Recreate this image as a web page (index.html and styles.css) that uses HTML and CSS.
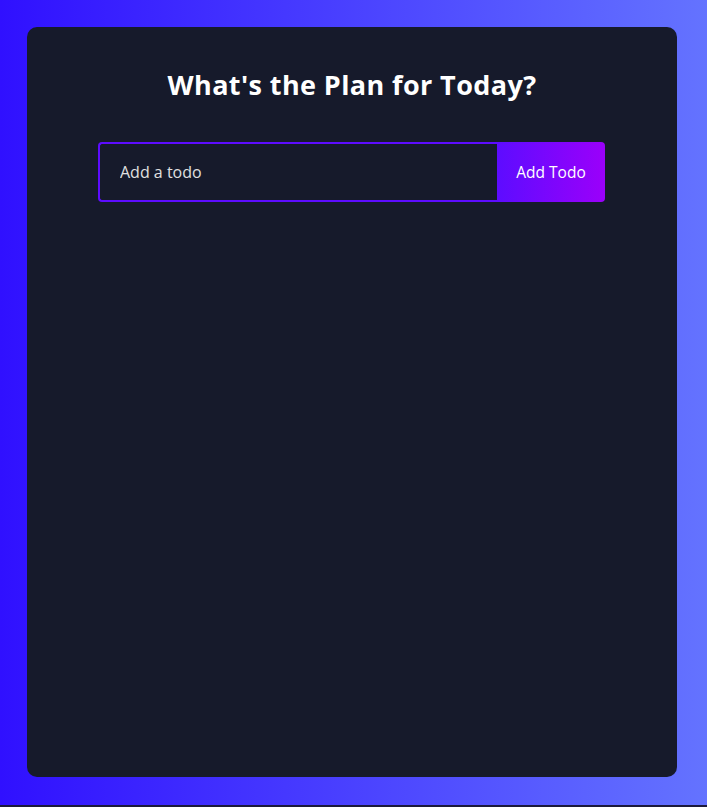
FILE: index.html
```html
<!DOCTYPE html>
<html lang="en">
<head>
<meta charset="utf-8">
<title>Todo App</title>
<link rel="stylesheet" href="styles.css">
</head>
<body>
<div class="page">
  <div class="todo-app">
    <h1 class="title">What's the Plan for Today?</h1>
    <form class="todo-form">
      <input class="todo-input" type="text" placeholder="Add a todo" name="text">
      <button class="todo-button" type="button">Add Todo</button>
    </form>
  </div>
</div>
</body>
</html>
```

FILE: styles.css
```css
html {
  background: #1c1a3c;
}
body {
  margin: 0;
  font-family: "Open Sans", Lato, sans-serif;
}
.page {
  height: 805px;
  background: linear-gradient(90deg, #3010ff 0%, #6473ff 100%);
  padding: 27px 0 0 27px;
  box-sizing: border-box;
}
.todo-app {
  width: 650px;
  height: 750px;
  background: #161a2b;
  border-radius: 10px;
  text-align: center;
  padding-top: 1px;
  box-sizing: border-box;
}
.title {
  margin: 40px 0 0;
  color: #fff;
  font-size: 27px;
  font-weight: 700;
  line-height: 34px;
  letter-spacing: 0.4px;
}
.todo-form {
  display: flex;
  justify-content: center;
  margin-top: 40px;
  padding-right: 1px;
}
.todo-input {
  width: 399px;
  height: 60px;
  box-sizing: border-box;
  padding: 0 20px;
  border: 2px solid #5d0cff;
  border-right: none;
  border-radius: 4px 0 0 4px;
  background: transparent;
  color: #fff;
  font-family: inherit;
  font-size: 16px;
  outline: none;
}
.todo-input::placeholder {
  color: #e0e0e0;
}
.todo-button {
  width: 108px;
  height: 60px;
  border: none;
  border-radius: 0 4px 4px 0;
  background: linear-gradient(90deg, #5d0cff 0%, #9b00fa 100%);
  color: #fff;
  font-family: inherit;
  font-size: 15.5px;
  padding: 0;
}
```
